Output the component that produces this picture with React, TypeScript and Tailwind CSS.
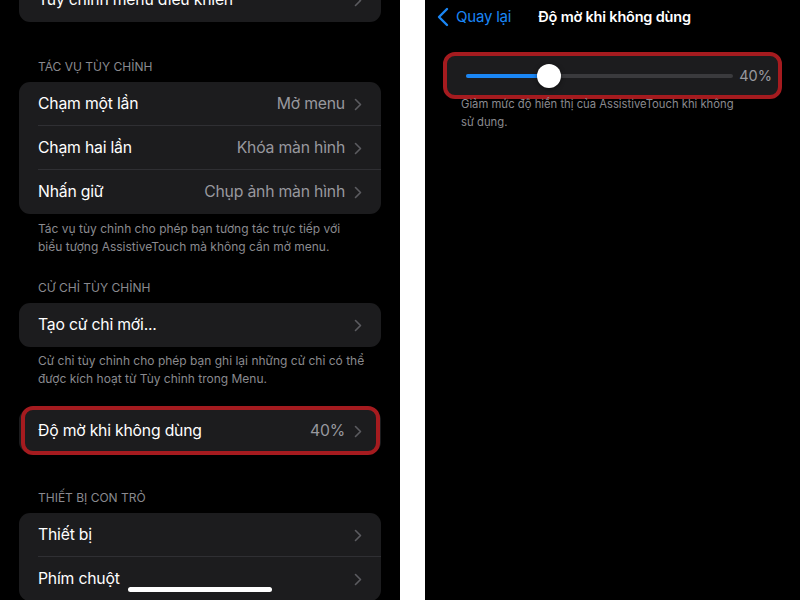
import React from "react";

const Chevron = () => (
  <svg width="8" height="13" viewBox="0 0 8 13" className="shrink-0">
    <path d="M1.5 1.5 L6.5 6.5 L1.5 11.5" fill="none" stroke="#5b5b60" strokeWidth="1.6" strokeLinecap="round" strokeLinejoin="round" />
  </svg>
);

type RowProps = { label: string; value?: string; sep?: boolean };

const Row = ({ label, value, sep }: RowProps) => (
  <div className="relative flex h-[44px] items-center pl-[19px] pr-[19px]">
    <span className="flex-1 whitespace-nowrap text-[15.75px] tracking-[-0.2px] text-white">{label}</span>
    {value && <span className="mr-[9px] whitespace-nowrap text-[15.75px] tracking-[-0.2px] text-[#98989e]">{value}</span>}
    <Chevron />
    {sep && <div className="absolute bottom-0 left-[19px] right-0 h-px bg-[#2f2f33]" />}
  </div>
);

const Card = ({ children, cls = "" }: { children: React.ReactNode; cls?: string }) => (
  <div className={`mx-[19px] overflow-hidden rounded-[11px] bg-[#1c1c1e] ${cls}`}>{children}</div>
);

const Header = ({ text, cls }: { text: string; cls: string }) => (
  <div className={`px-[38px] pb-[7px] text-[12px] leading-[16px] text-[#8a8a8f] ${cls}`}>{text}</div>
);

const Footer = ({ lines, cls }: { lines: string[]; cls: string }) => (
  <div className={`whitespace-nowrap px-[38px] text-[12px] leading-[18px] text-[#8a8a8f] ${cls}`}>
    {lines.map((l) => (
      <div key={l}>{l}</div>
    ))}
  </div>
);

export default function App() {
  return (
    <div
      className="flex h-[600px] w-[800px] overflow-hidden bg-white"
      style={{ fontFamily: "Inter, 'Noto Sans', sans-serif" }}
    >
      <div className="relative h-[600px] w-[400px] shrink-0 overflow-hidden bg-black">
        <div className="mt-[-22px]">
          <Card>
            <Row label="Tùy chỉnh menu điều khiển" />
          </Card>
          <Header text="TÁC VỤ TÙY CHỈNH" cls="pt-[37px]" />
          <Card>
            <Row label="Chạm một lần" value="Mở menu" sep />
            <Row label="Chạm hai lần" value="Khóa màn hình" sep />
            <Row label="Nhấn giữ" value="Chụp ảnh màn hình" />
          </Card>
          <Footer
            cls="pt-[6px]"
            lines={[
              "Tác vụ tùy chỉnh cho phép bạn tương tác trực tiếp với",
              "biểu tượng AssistiveTouch mà không cần mở menu.",
            ]}
          />
          <Header text="CỬ CHỈ TÙY CHỈNH" cls="pt-[24px]" />
          <Card>
            <Row label="Tạo cử chỉ mới..." />
          </Card>
          <Footer
            cls="pt-[5px]"
            lines={[
              "Cử chỉ tùy chỉnh cho phép bạn ghi lại những cử chỉ có thể",
              "được kích hoạt từ Tùy chỉnh trong Menu.",
            ]}
          />
          <div className="relative mt-[21px]">
            <Card>
              <Row label="Độ mờ khi không dùng" value="40%" />
            </Card>
            <div className="pointer-events-none absolute bottom-[-2px] left-[21px] right-[20px] top-[-3px] rounded-[12px] border-[4px] border-[#a51b1f]" />
          </div>
          <Header text="THIẾT BỊ CON TRỎ" cls="pt-[37px]" />
          <Card>
            <Row label="Thiết bị" sep />
            <Row label="Phím chuột" />
          </Card>
        </div>
        <div className="absolute bottom-[8px] left-[128px] h-[5px] w-[144px] rounded-full bg-white" />
      </div>

      <div className="w-[25px] shrink-0 bg-white" />

      <div className="h-[600px] flex-1 bg-black">
        <div className="flex h-[34px] items-center pl-[12px]">
          <svg width="12" height="20" viewBox="0 0 12 20" className="mr-[7px]">
            <path d="M10 2 L2 10 L10 18" fill="none" stroke="#1a86f5" strokeWidth="2.4" strokeLinecap="round" strokeLinejoin="round" />
          </svg>
          <span className="text-[15px] tracking-[-0.2px] text-[#1a86f5]">Quay lại</span>
          <span className="ml-[27px] text-[14.5px] font-semibold tracking-[-0.2px] text-white">Độ mờ khi không dùng</span>
        </div>
        <div className="ml-[18px] mr-[18px] mt-[18px] flex h-[47px] items-center rounded-[12px] border-[4px] border-[#a51b1f] bg-[#1c1c1e] pl-[19px] pr-[6px]">
          <div className="relative flex h-[24px] w-[267px] items-center">
            <div className="h-[4px] w-full rounded-full bg-[#3a3a3d]" />
            <div className="absolute left-0 top-[10px] h-[4px] w-[83px] rounded-l-full bg-[#1a86f5]" />
            <div className="absolute left-[71px] top-0 h-[24px] w-[24px] rounded-full bg-white shadow-[0_1px_4px_rgba(0,0,0,0.5)]" />
          </div>
          <span className="ml-auto text-[14.5px] text-[#98989e]">40%</span>
        </div>
        <div className="whitespace-nowrap pl-[36px] pt-0 text-[11.25px] leading-[18px] text-[#8a8a8f]">
          <div className="-mt-[4px]">Giảm mức độ hiển thị của AssistiveTouch khi không</div>
          <div>sử dụng.</div>
        </div>
      </div>
    </div>
  );
}
